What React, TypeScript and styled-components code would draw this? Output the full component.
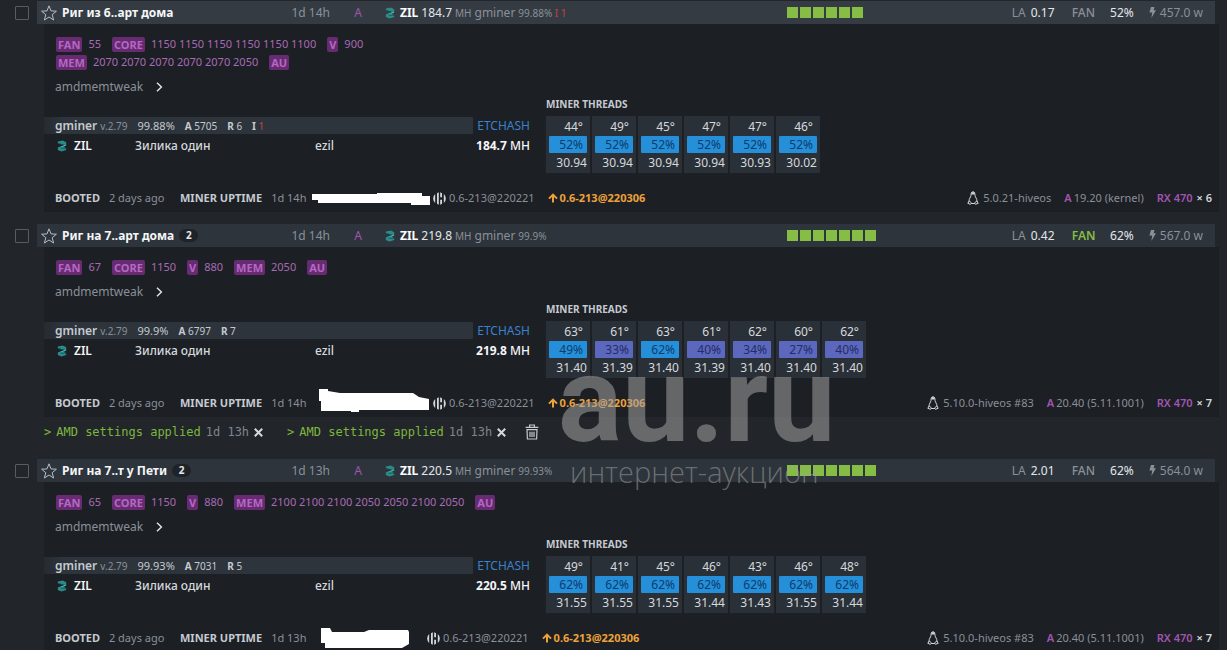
import React from "react";
import styled, { createGlobalStyle } from "styled-components";

const GlobalStyle = createGlobalStyle`
  *, *::before, *::after { box-sizing: border-box; }
  html { background: #22262b; }
  body {
    margin: 0;
    background: #22262b;
    color: #c5cad1;
    font-family: "Noto Sans", "Open Sans", sans-serif;
    font-size: 12px;
    line-height: 18px;
    overflow-x: hidden;
  }
  button { font: inherit; color: inherit; background: none; border: 0; padding: 0; cursor: pointer; }
`;

const Page = styled.main`
  position: relative;
  padding: 1px 8px 0 0;
`;

const Farm = styled.article`
  display: grid;
  grid-template-columns: 37px 1fr;
  margin-bottom: 12px;
  &:last-of-type { margin-bottom: 0; }
`;

const SelectCell = styled.label`
  display: flex;
  justify-content: flex-end;
  align-items: center;
  height: 23px;
  padding-right: 8px;
`;

const Checkbox = styled.input`
  appearance: none;
  width: 14px;
  height: 14px;
  margin: 0;
  border: 1px solid #565c64;
  border-radius: 1px;
`;

const Header = styled.header<{ $hovered?: boolean }>`
  display: grid;
  grid-template-columns: 209px 80px 32px 23px 402px 1fr auto;
  align-items: center;
  height: 23px;
  margin-right: 4px;
  padding: 0 12px 0 4px;
  background: ${(p) => (p.$hovered ? "#353b42" : "#2d343b")};
  color: #8a9098;
  white-space: nowrap;
`;

const NameCell = styled.div`
  display: flex;
  align-items: center;
  gap: 5px;
`;

const StarButton = styled.button`
  display: flex;
`;

const Name = styled.h2`
  margin: 0;
  font-size: 12px;
  font-weight: 700;
  color: #f4f6f8;
`;

const Count = styled.span`
  min-width: 19px;
  height: 13px;
  border-radius: 7px;
  background: #1f2328;
  color: #e4e7ea;
  font-size: 10px;
  font-weight: 700;
  line-height: 13px;
  text-align: center;
`;

const Uptime = styled.span`
  justify-self: end;
`;

const Brand = styled.span`
  justify-self: end;
  color: #a155b0;
`;

const Mining = styled.div`
  display: flex;
  grid-column: 5;
  align-items: baseline;
  gap: 3px;
  svg {
    align-self: center;
    margin-right: 2px;
  }
`;

const CoinName = styled.strong`
  font-weight: 700;
  color: #ffffff;
`;

const Value = styled.span`
  color: #e4e7ea;
`;

const Small = styled.small`
  font-size: 10px;
`;

const Danger = styled.span`
  color: #c8414b;
`;

const Gpus = styled.div`
  display: flex;
  gap: 2px;
`;

const Gpu = styled.i`
  width: 11px;
  height: 11px;
  background: #86bd45;
`;

const Vitals = styled.div`
  display: flex;
  align-items: center;
`;

const Load = styled.span`
  display: flex;
  gap: 5px;
  width: 60px;
`;

const FanLabel = styled.span<{ $on?: boolean }>`
  width: 38px;
  color: ${(p) => (p.$on ? "#86bd45" : "#8a9098")};
  font-weight: ${(p) => (p.$on ? 600 : 500)};
`;

const FanValue = styled(Value)`
  width: 24px;
  text-align: right;
`;

const Power = styled.span`
  display: flex;
  align-items: center;
  gap: 4px;
  margin-left: 15px;
`;

const Body = styled.div`
  grid-column: 2;
  margin-left: 7px;
  padding-top: 11px;
  background: #1c1f24;
`;

const Tuning = styled.div`
  display: flex;
  flex-wrap: wrap;
  column-gap: 11px;
  width: 472px;
  padding-left: 12px;
  font-size: 11px;
  color: #a76bb5;
`;

const TuningItem = styled.span`
  display: flex;
  align-items: center;
  gap: 6px;
`;

const Tag = styled.b`
  padding: 0 2px;
  border-radius: 2px;
  background: #672b72;
  color: #b567c2;
  font-weight: 700;
  line-height: 15px;
`;

const Tweak = styled.button`
  display: flex;
  align-items: center;
  gap: 13px;
  height: 18px;
  margin: 7px 0 0 11px;
  color: #8a9098;
`;

const Work = styled.div`
  display: flex;
`;

const Miner = styled.section`
  width: 429px;
  padding-top: 21px;
`;

const MinerBar = styled.div`
  display: flex;
  align-items: baseline;
  height: 17px;
  padding-left: 11px;
  background: linear-gradient(90deg, #262b31, #2d343b 20px);
  font-size: 10px;
  line-height: 17px;
  color: #c5cad1;
`;

const MinerName = styled.strong`
  font-size: 12px;
  font-weight: 600;
`;

const Version = styled.span`
  margin-left: 3px;
  color: #8a9098;
`;

const Ratio = styled.span`
  margin-left: 10px;
  font-size: 11px;
`;

const Stat = styled.span`
  margin-left: 10px;
`;

const Wallet = styled.div`
  display: grid;
  grid-template-columns: 17px 61px 180px 1fr;
  align-items: center;
  height: 24px;
  padding-left: 13px;
  font-size: 12px;
  font-weight: 500;
  color: #d5d9dd;
`;

const Coin = styled.strong`
  font-weight: 600;
  color: #f4f6f8;
`;

const Rate = styled.div`
  width: 57px;
  padding-top: 21px;
  text-align: right;
  white-space: nowrap;
`;

const Algo = styled.div`
  line-height: 17px;
  color: #3a83cc;
`;

const Hashrate = styled.div`
  line-height: 24px;
  font-weight: 500;
  color: #f4f6f8;
`;

const Threads = styled.table`
  margin: 0 0 0 14px;
  border-collapse: separate;
  border-spacing: 2px 0;
  caption {
    height: 20px;
    padding-left: 2px;
    font-size: 10px;
    font-weight: 700;
    line-height: 16px;
    text-align: left;
  }
`;

const ThreadCell = styled.td<{ $inset?: boolean }>`
  width: 44px;
  height: 19px;
  padding: 0 ${(p) => (p.$inset ? 7 : 3)}px 0 3px;
  background: #2a3037;
  color: #d5d9dd;
  line-height: 17px;
  text-align: right;
  vertical-align: ${(p) => (p.$inset ? "bottom" : "top")};
`;

const FanPill = styled.span<{ $low?: boolean }>`
  display: block;
  height: 17px;
  margin-top: 1px;
  padding-right: 4px;
  border-radius: 1px;
  background: ${(p) => (p.$low ? "#5c68bd" : "#268fd9")};
  color: ${(p) => (p.$low ? "#242c66" : "#0c3d6b")};
  line-height: 17px;
`;

const Footer = styled.footer`
  display: flex;
  align-items: center;
  height: 28px;
  margin-top: 11px;
  padding: 0 7px 0 11px;
  font-size: 11px;
  color: #8a9098;
  white-space: nowrap;
`;

const Caption = styled.b`
  margin-right: 9px;
  font-weight: 700;
  color: #c5cad1;
`;

const Booted = styled.span`
  width: 125px;
`;

const MinerUptime = styled.span`
  width: 127px;
`;

const RedactedAddress = styled.svg`
  height: 32px;
  fill: #ffffff;
`;

const Current = styled.span`
  display: flex;
  align-items: center;
  gap: 3px;
`;

const Upgrade = styled.a`
  display: flex;
  align-items: center;
  gap: 2px;
  margin-left: 13px;
  color: #eda23a;
  font-weight: 700;
  text-decoration: none;
`;

const System = styled.div`
  display: flex;
  align-items: center;
  gap: 13px;
  margin-left: auto;
`;

const Kernel = styled.span`
  display: flex;
  align-items: center;
  gap: 4px;
`;

const Driver = styled.span`
  display: flex;
  gap: 2px;
`;

const Purple = styled.b`
  color: #a155b0;
  font-weight: 600;
`;

const Times = styled.b`
  margin-left: 4px;
  color: #d5d9dd;
  font-weight: 600;
`;

const Messages = styled.div`
  grid-column: 2;
  display: flex;
  align-items: center;
  height: 30px;
  padding-left: 7px;
  font-family: "DejaVu Sans Mono", monospace;
  color: #7f858d;
`;

const Message = styled.span`
  display: flex;
  align-items: center;
  gap: 5px;
  & + & { margin-left: 24px; }
`;

const MessageLink = styled.a`
  display: flex;
  gap: 5px;
  color: #7db63e;
  text-decoration: none;
`;

const IconButton = styled.button`
  display: flex;
`;

const ClearButton = styled(IconButton)`
  margin-left: 19px;
`;

const Watermark = styled.div`
  position: absolute;
  top: 344px;
  left: 558px;
  color: rgba(160, 160, 160, 0.55);
  pointer-events: none;
  white-space: nowrap;
`;

const WatermarkName = styled.div`
  font-family: Roboto, "Open Sans", sans-serif;
  font-size: 120px;
  font-weight: 700;
  line-height: 112px;
`;

const WatermarkLine = styled.div`
  padding-left: 12px;
  font-family: "Open Sans", sans-serif;
  font-size: 29px;
  font-weight: 300;
  line-height: 32px;
`;

const StarIcon = () => (
  <svg width="16" height="16" viewBox="0 0 16 16" fill="none" stroke="#b9bec5" strokeWidth="1" strokeLinejoin="round">
    <path d="M8 .8 10 5.9 15.4 6.2 11.2 9.7 12.6 15 8 12 3.4 15 4.8 9.7.6 6.2 6 5.9Z" />
  </svg>
);

const ZilIcon = () => (
  <svg width="10" height="12" viewBox="0 0 10 12">
    <path d="M.8 1.6 5.8.4 9.2 2.2V4L8.200 5 .8 3.200Z" fill="#2a8c8a" />
    <path d="M9.200 4.200V5.600L3.600 8.200 1 7.400Z" fill="#43b9b2" />
    <path d="M.8 7.600 6.200 6.600 9.200 8.200V10L4.600 11.600.8 10Z" fill="#2a8c8a" />
    <path d="M1 3.400 6 4.800M3.800 8.200 9 8.400" stroke="#1d5257" strokeWidth=".8" />
  </svg>
);

const BoltIcon = () => (
  <svg width="7" height="11" viewBox="0 0 7 11" fill="#8a9098">
    <path d="M2 0 5.5 0 4.6 3.2 7 3.2 2.4 11 3.2 5.6 .4 5.6Z" />
  </svg>
);

const ChevronIcon = () => (
  <svg width="7" height="10" viewBox="0 0 7 10" fill="none" stroke="#e4e7ea" strokeWidth="1.4">
    <path d="M1 .8 5.4 5 1 9.2" />
  </svg>
);

const HiveIcon = () => (
  <svg width="13" height="13" viewBox="0 0 13 13" fill="#d5d9dd">
    <path d="M2.200 2V11Q.2 9.200 .2 6.500T2.200 2Z" />
    <path d="M4 1.200 5.800.2V12.800L4 11.800Z" />
    <path d="M7.200.2 9 1.200V5.200H7.200ZM7.200 7.800H9V11.800L7.200 12.800Z" />
    <path d="M10.800 2V11Q12.800 9.200 12.800 6.500T10.800 2Z" />
  </svg>
);

const ArrowUpIcon = () => (
  <svg width="10" height="10" viewBox="0 0 10 10" fill="none" stroke="#eda23a" strokeWidth="2">
    <path d="M5 9.600V2M1 5.600 5 1.600 9 5.600" />
  </svg>
);

const PenguinIcon = () => (
  <svg width="12" height="14" viewBox="0 0 12 14" fill="none" stroke="#d5d9dd" strokeWidth="1">
    <path d="M4 4.5C4 2 4.4.8 6 .8S8 2 8 4.5C8.400 6.500 10 7.500 10 10.500L8.500 12.500H3.500L2 10.500C2 7.500 3.600 6.500 4 4.500Z" />
    <path d="M4.500 3.500H7.500V1.200H4.500Z" fill="#d5d9dd" stroke="none" />
    <path d="M2.200 10 .8 12.300 3.600 13.300 4.600 12ZM9.800 10 11.200 12.300 8.400 13.300 7.400 12Z" fill="#1c1f24" />
  </svg>
);

const CrossIcon = () => (
  <svg width="9" height="9" viewBox="0 0 9 9" stroke="#d5d9dd" strokeWidth="2">
    <path d="M.8.8 8.200 8.200M8.200.8.8 8.200" />
  </svg>
);

const TrashIcon = () => (
  <svg width="14" height="16" viewBox="0 0 14 16" fill="none" stroke="#c5cad1" strokeWidth="1.200">
    <path d="M.6 3.400H13.400M4.600 3.200V1H9.400V3.200M2 5.600 2.400 15H11.600L12 5.600ZM5 7.800V13M7 7.800V13M9 7.800V13" />
  </svg>
);

interface Rig {
  name: string;
  count?: number;
  hovered?: boolean;
  uptime: string;
  rate: string;
  ratio: string;
  invalid?: number;
  load: string;
  fan: string;
  fanOn?: boolean;
  power: string;
  tuning: [string, string?][];
  accepted: string;
  rejected: string;
  threads: [string, number, string][];
  redaction: { width: number; path: string };
  kernel: string;
  driver: string;
  messages?: string[];
}

const rigs: Rig[] = [
  {
    name: "Риг из 6..арт дома",
    hovered: true,
    uptime: "1d 14h",
    rate: "184.7",
    ratio: "99.88%",
    invalid: 1,
    load: "0.17",
    fan: "52%",
    power: "457.0 w",
    tuning: [["FAN", "55"], ["CORE", "1150 1150 1150 1150 1150 1100"], ["V", "900"], ["MEM", "2070 2070 2070 2070 2070 2050"], ["AU"]],
    accepted: "5705",
    rejected: "6",
    threads: [["44°", 52, "30.94"], ["49°", 52, "30.94"], ["45°", 52, "30.94"], ["47°", 52, "30.94"], ["47°", 52, "30.93"], ["46°", 52, "30.02"]],
    redaction: { width: 126, path: "M5 12H70V11H115V14H123V23H104V21H11V18H5Z" },
    kernel: "5.0.21-hiveos",
    driver: "19.20 (kernel)",
  },
  {
    name: "Риг на 7..арт дома",
    count: 2,
    uptime: "1d 14h",
    rate: "219.8",
    ratio: "99.9%",
    load: "0.42",
    fan: "62%",
    fanOn: true,
    power: "567.0 w",
    tuning: [["FAN", "67"], ["CORE", "1150"], ["V", "880"], ["MEM", "2050"], ["AU"]],
    accepted: "6797",
    rejected: "7",
    threads: [["63°", 49, "31.40"], ["61°", 33, "31.39"], ["63°", 62, "31.40"], ["61°", 40, "31.39"], ["62°", 34, "31.40"], ["60°", 27, "31.40"], ["62°", 40, "31.40"]],
    redaction: { width: 126, path: "M12 2H21V4L33 6H106L112 10L122 12V23H52V25H44V24H14V14H12Z" },
    kernel: "5.10.0-hiveos #83",
    driver: "20.40 (5.11.1001)",
    messages: ["1d 13h", "1d 13h"],
  },
  {
    name: "Риг на 7..т у Пети",
    count: 2,
    uptime: "1d 13h",
    rate: "220.5",
    ratio: "99.93%",
    load: "2.01",
    fan: "62%",
    power: "564.0 w",
    tuning: [["FAN", "65"], ["CORE", "1150"], ["V", "880"], ["MEM", "2100 2100 2100 2050 2050 2100 2050"], ["AU"]],
    accepted: "7031",
    rejected: "5",
    threads: [["49°", 62, "31.55"], ["41°", 62, "31.55"], ["45°", 62, "31.55"], ["46°", 62, "31.44"], ["43°", 62, "31.43"], ["46°", 62, "31.55"], ["48°", 62, "31.44"]],
    redaction: { width: 120, path: "M14 6H23L25 10H57L62 8H101L102 10V22L95 26H18V21H14Z" },
    kernel: "5.10.0-hiveos #83",
    driver: "20.40 (5.11.1001)",
  },
];

const RigCard = ({ rig }: { rig: Rig }) => (
  <Farm>
    <SelectCell>
      <Checkbox type="checkbox" aria-label={rig.name} />
    </SelectCell>
    <Header $hovered={rig.hovered}>
      <NameCell>
        <StarButton aria-label="Favorite"><StarIcon /></StarButton>
        <Name>{rig.name}</Name>
        {rig.count && <Count>{rig.count}</Count>}
      </NameCell>
      <Uptime>{rig.uptime}</Uptime>
      <Brand>A</Brand>
      <Mining>
        <ZilIcon />
        <CoinName>ZIL</CoinName>
        <Value>{rig.rate}</Value>
        <Small>MH</Small>
        <span>gminer</span>
        <Small>{rig.ratio} {rig.invalid && <Danger>I {rig.invalid}</Danger>}</Small>
      </Mining>
      <Gpus>{rig.threads.map((_, i) => <Gpu key={i} />)}</Gpus>
      <Vitals>
        <Load>LA <Value>{rig.load}</Value></Load>
        <FanLabel $on={rig.fanOn}>FAN</FanLabel>
        <FanValue>{rig.fan}</FanValue>
        <Power><BoltIcon />{rig.power}</Power>
      </Vitals>
    </Header>
    <Body>
      <Tuning>
        {rig.tuning.map(([label, value]) => (
          <TuningItem key={label}><Tag>{label}</Tag>{value}</TuningItem>
        ))}
      </Tuning>
      <Tweak>amdmemtweak <ChevronIcon /></Tweak>
      <Work>
        <Miner>
          <MinerBar>
            <MinerName>gminer</MinerName>
            <Version>v.2.79</Version>
            <Ratio>{rig.ratio}</Ratio>
            <Stat><b>A</b> {rig.accepted}</Stat>
            <Stat><b>R</b> {rig.rejected}</Stat>
            {rig.invalid && <Stat><b>I</b> <Danger>{rig.invalid}</Danger></Stat>}
          </MinerBar>
          <Wallet>
            <ZilIcon />
            <Coin>ZIL</Coin>
            <span>Зилика один</span>
            <span>ezil</span>
          </Wallet>
        </Miner>
        <Rate>
          <Algo>ETCHASH</Algo>
          <Hashrate><b>{rig.rate}</b> MH</Hashrate>
        </Rate>
        <Threads>
          <caption>MINER THREADS</caption>
          <tbody>
            <tr>{rig.threads.map(([temp], i) => <ThreadCell key={i} $inset>{temp}</ThreadCell>)}</tr>
            <tr>{rig.threads.map(([, fan], i) => <ThreadCell key={i}><FanPill $low={fan <= 40}>{fan}%</FanPill></ThreadCell>)}</tr>
            <tr>{rig.threads.map(([, , speed], i) => <ThreadCell key={i}>{speed}</ThreadCell>)}</tr>
          </tbody>
        </Threads>
      </Work>
      <Footer>
        <Booted><Caption>BOOTED</Caption>2 days ago</Booted>
        <MinerUptime><Caption>MINER UPTIME</Caption>{rig.uptime}</MinerUptime>
        <RedactedAddress width={rig.redaction.width} aria-hidden="true">
          <path d={rig.redaction.path} />
        </RedactedAddress>
        <Current><HiveIcon />0.6-213@220221</Current>
        <Upgrade href="#"><ArrowUpIcon />0.6-213@220306</Upgrade>
        <System>
          <Kernel><PenguinIcon />{rig.kernel}</Kernel>
          <Driver><Purple>A</Purple>{rig.driver}</Driver>
          <span><Purple>RX 470</Purple><Times>× {rig.threads.length}</Times></span>
        </System>
      </Footer>
    </Body>
    {rig.messages && (
      <Messages>
        {rig.messages.map((age, i) => (
          <Message key={i}>
            <MessageLink href="#"><span>&gt;</span><span>AMD settings applied</span></MessageLink>
            {age}
            <IconButton aria-label="Dismiss"><CrossIcon /></IconButton>
          </Message>
        ))}
        <ClearButton aria-label="Delete all"><TrashIcon /></ClearButton>
      </Messages>
    )}
  </Farm>
);

export default function App() {
  return (
    <>
      <GlobalStyle />
      <Page>
        {rigs.map((rig) => <RigCard key={rig.name} rig={rig} />)}
        <Watermark>
          <WatermarkName>au.ru</WatermarkName>
          <WatermarkLine>интернет-аукцион</WatermarkLine>
        </Watermark>
      </Page>
    </>
  );
}
